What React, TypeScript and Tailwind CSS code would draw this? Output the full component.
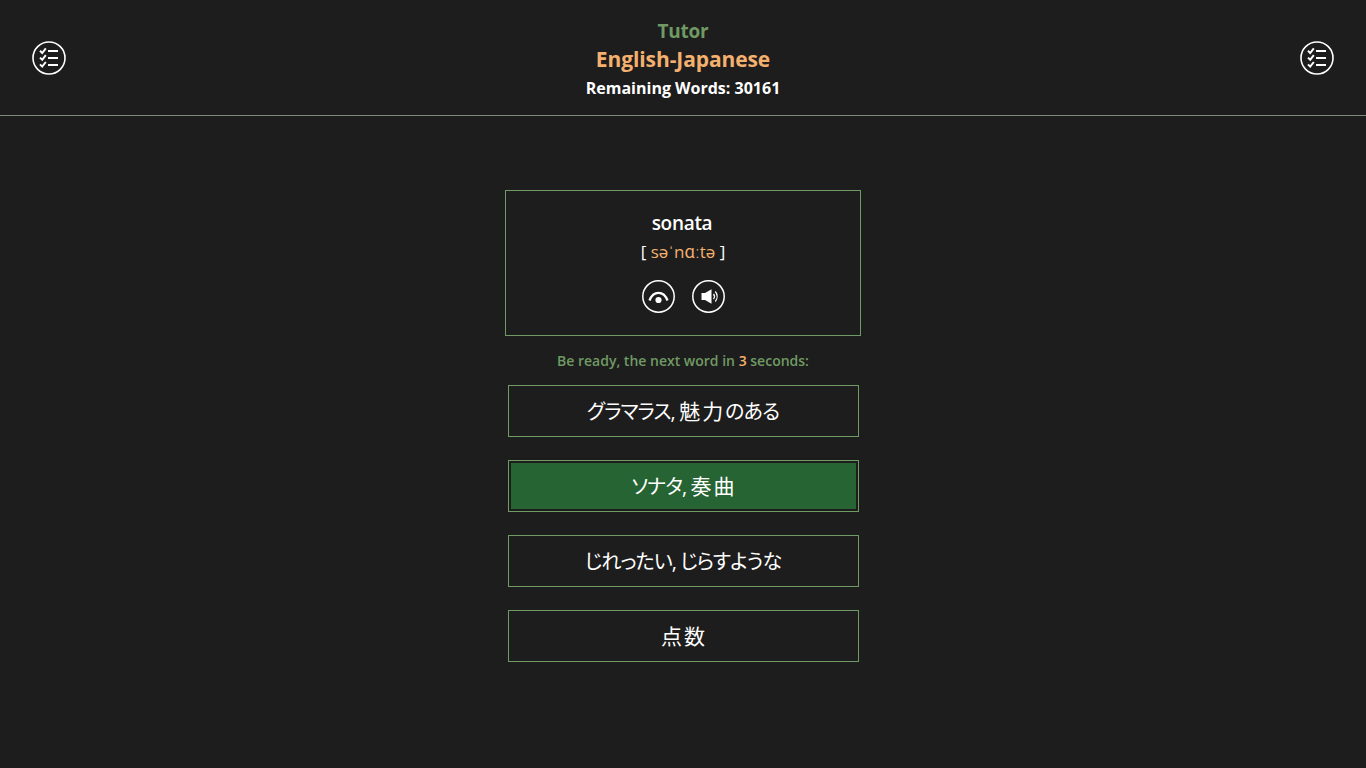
import React from 'react';

const FONT = '"Open Sans", "Noto Sans CJK JP", sans-serif';

const ChecklistIcon = () => (
  <svg width="34" height="34" viewBox="0 0 34 34" fill="none" stroke="#fff">
    <circle cx="17" cy="17" r="16" strokeWidth="1.6" />
    <path d="M8 9.8l2.2 2.2 3.6-4.6M8 16.6l2.2 2.2 3.6-4.6M8 23.4l2.2 2.2 3.6-4.6" strokeWidth="2" />
    <path d="M16 10h10M16 17h10M16 24h10" strokeWidth="2" />
  </svg>
);

const EyeIcon = () => (
  <svg width="33" height="33" viewBox="0 0 33 33" fill="none" stroke="#fff">
    <circle cx="16.5" cy="16.5" r="15.7" strokeWidth="1.5" />
    <path d="M7.5 20.5C9.5 15 13 12.8 16.5 12.8S23.5 15 25.5 20.5" strokeWidth="2.3" />
    <circle cx="16.5" cy="20" r="3.1" fill="#fff" stroke="none" />
  </svg>
);

const SpeakerIcon = () => (
  <svg width="33" height="33" viewBox="0 0 33 33" fill="none" stroke="#fff">
    <circle cx="16.5" cy="16.5" r="15.7" strokeWidth="1.5" />
    <path d="M9.5 13h3.5l6.5-3.8v14.6L13 20H9.5z" fill="#fff" stroke="none" />
    <path d="M21.5 14a4 4 0 0 1 0 5M23.3 11.5a8 8 0 0 1 0 10" strokeWidth="1.3" />
  </svg>
);

// kanji sit wider apart than kana in the reference
const answers = [
  { parts: [['グラマラス, ', false], ['魅力', true], ['のある', false]], on: false, shift: false },
  { parts: [['ソナタ, ', false], ['奏曲', true]], on: true, shift: true },
  { parts: [['じれったい, じらすような', false]], on: false, shift: false },
  { parts: [['点数', true]], on: false, shift: true },
] as { parts: [string, boolean][]; on: boolean; shift: boolean }[];

export default function App() {
  return (
    <div className="min-h-[768px] bg-[#1d1d1d] text-white overflow-hidden" style={{ fontFamily: FONT }}>
      <header className="h-[116px] border-b border-[#7f8a7c] flex items-center justify-between px-[32px]">
        <ChecklistIcon />
        <div className="flex flex-col items-center pt-[5px]">
          <div className="text-[19px] leading-[28px] font-bold text-[#6f9a63] tracking-[-0.2px]">Tutor</div>
          <div className="text-[21px] leading-[28px] font-bold text-[#f4b06f] tracking-[-0.1px]">English-Japanese</div>
          <div className="text-[16px] leading-[30px] font-bold">Remaining Words: 30161</div>
        </div>
        <ChecklistIcon />
      </header>

      <main className="flex flex-col items-center pt-[74px]">
        <section className="w-[356px] h-[146px] border border-[#6f9a63] flex flex-col items-center pt-[18px]">
          <div className="text-[19px] leading-[28px] font-semibold tracking-[-0.3px] -ml-[2px]">sonata</div>
          <div className="text-[17px] leading-[28px] mt-[1px]">
            [ <span className="text-[#f4b06f]">səˈnɑːtə</span> ]
          </div>
          <div className="flex gap-[17px] mt-[14px]">
            <EyeIcon />
            <SpeakerIcon />
          </div>
        </section>

        <p className="text-[14px] leading-[20px] font-semibold text-[#6f9a63] mt-[15px]">
          Be ready, the next word in <span className="text-[#f4b06f]">3</span> seconds:
        </p>

        <div className="flex flex-col gap-[23px] mt-[14px]">
          {answers.map((a, i) => (
            <div key={i} className="w-[351px] h-[52px] border border-[#6f9a63] p-[2px]">
              <div
                className={`h-full flex items-center justify-center text-[20px] [font-feature-settings:'palt'] whitespace-pre ${a.on ? 'bg-[#266433]' : ''} ${a.shift ? 'pl-[2px]' : ''}`}
              >
                <span className="pt-[2px]">
                  {a.parts.map(([t, kanji], j) => (
                    <span key={j} className={kanji ? 'text-[21px] tracking-[2px]' : 'tracking-[-0.9px]'}>
                      {t}
                    </span>
                  ))}
                </span>
              </div>
            </div>
          ))}
        </div>
      </main>
    </div>
  );
}
